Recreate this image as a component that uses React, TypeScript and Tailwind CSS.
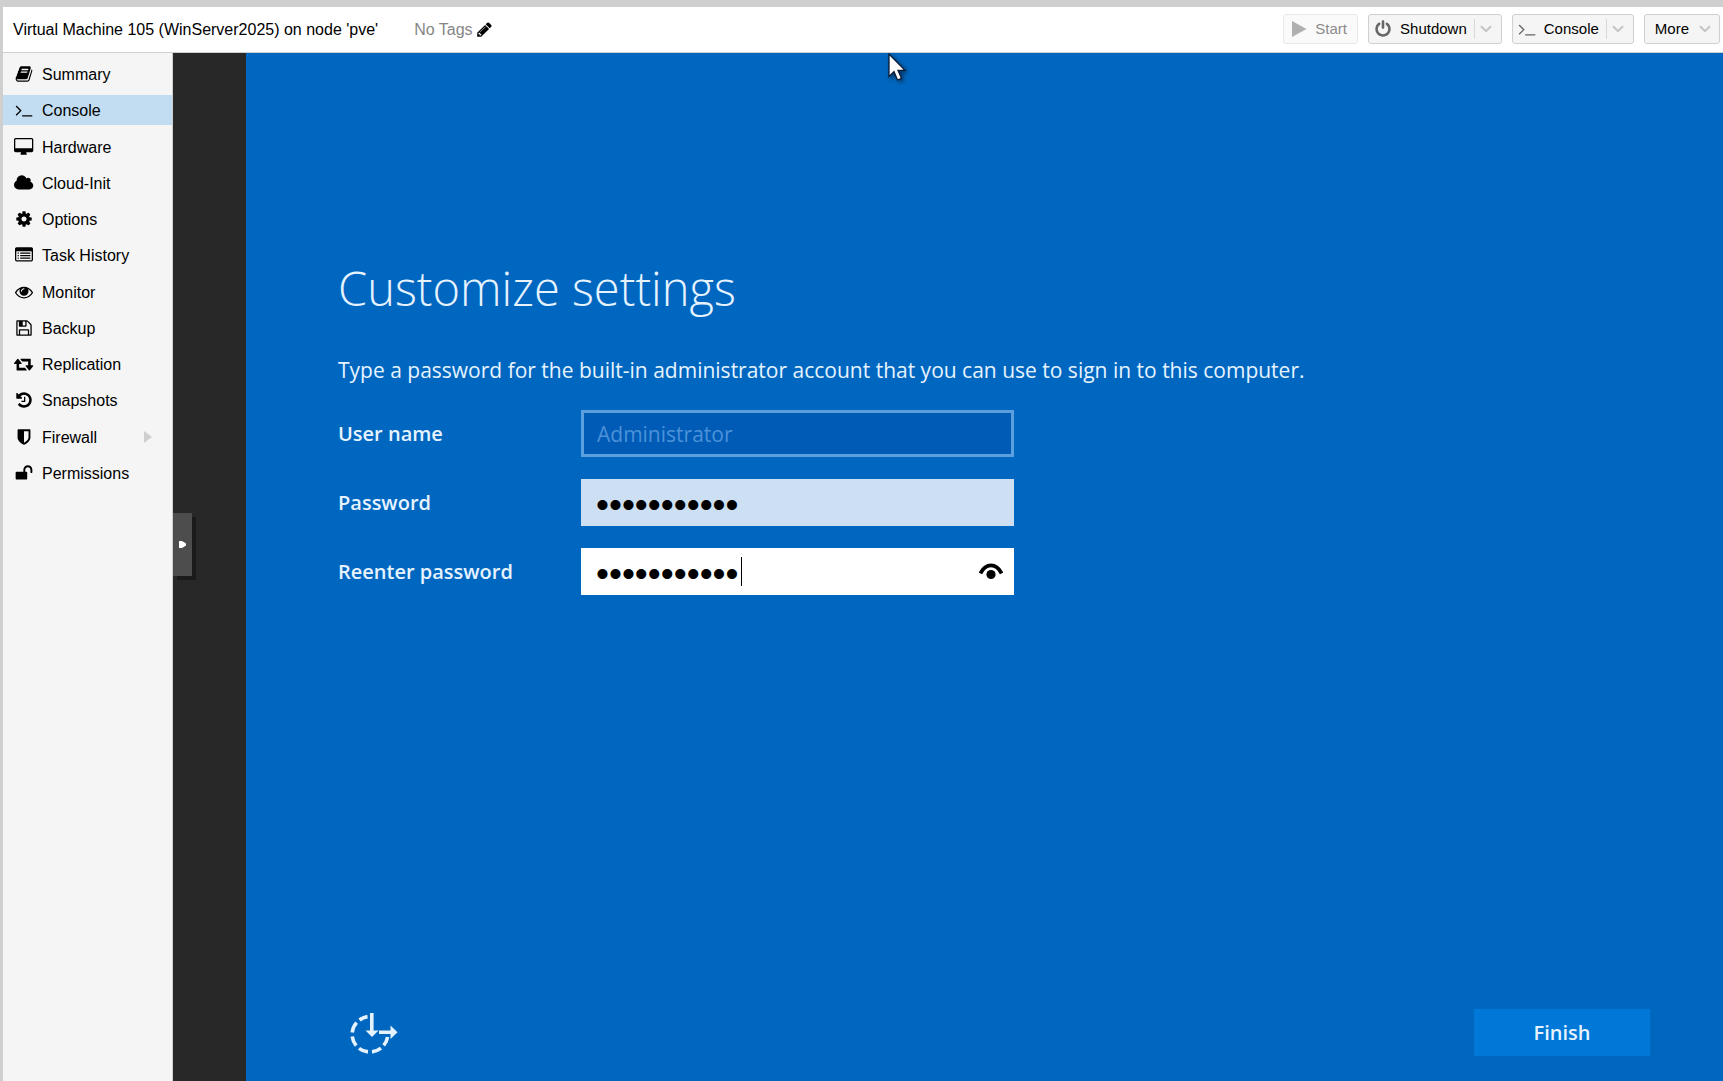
import React, { useState } from 'react';

interface IconProps {
  className?: string;
}

interface NavItem {
  label: string;
  width: number;
  path: string;
  hasChildren?: boolean;
}

const PATHS = {
  book: 'M1703 478q40 57 18 129l-275 906q-19 64-76.5 107.5t-122.5 43.5h-923q-77 0-148.5-53.5t-99.5-131.5q-24-67-2-127 0-4 3-27t4-37q1-8-3-21.5t-3-19.5q2-11 8-21t16.5-23.5 16.5-23.5q23-38 45-91.5t30-91.5q3-10 .5-30t-.5-28q3-11 17-28t17-23q21-36 42-92t25-90q1-9-2.5-32t.5-28q4-13 22-30.5t22-22.5q19-26 42.5-84.5t27.5-96.5q1-8-3-25.5t-2-26.5q2-8 9-18t18-23 17-21q8-12 16.5-30.5t15-35 16-36 19.5-32 26.5-23.5 36-11.5 47.5 5.5l-1 3q38-9 51-9h761q74 0 114 56t18 130l-274 906q-36 119-71.5 153.5t-128.5 34.5h-869q-27 0-38 15-11 16-1 43 24 70 144 70h923q29 0 56-15.5t35-41.5l300-987q7-22 5-57 38 15 59 43zm-1064 2q-4 13 2 22.5t20 9.5h608q13 0 25.5-9.5t16.5-22.5l21-64q4-13-2-22.5t-20-9.5h-608q-13 0-25.5 9.5t-16.5 22.5zm-83 256q-4 13 2 22.5t20 9.5h608q13 0 25.5-9.5t16.5-22.5l21-64q4-13-2-22.5t-20-9.5h-608q-13 0-25.5 9.5t-16.5 22.5z',
  terminal: 'M649 983l-466 466q-10 10-23 10t-23-10l-50-50q-10-10-10-23t10-23l393-393-393-393q-10-10-10-23t10-23l50-50q10-10 23-10t23 10l466 466q10 10 10 23t-10 23zm1079 457v64q0 14-9 23t-23 9h-960q-14 0-23-9t-9-23v-64q0-14 9-23t23-9h960q14 0 23 9t9 23z',
  desktop: 'M1792 992v-832q0-13-9.5-22.5t-22.5-9.5h-1600q-13 0-22.5 9.5t-9.5 22.5v832q0 13 9.5 22.5t22.5 9.5h1600q13 0 22.5-9.5t9.5-22.5zm128-832v1088q0 66-47 113t-113 47h-544q0 37 16 77.5t32 71 16 43.5q0 26-19 45t-45 19h-512q-26 0-45-19t-19-45q0-14 16-44t32-70 16-78h-544q-66 0-113-47t-47-113v-1088q0-66 47-113t113-47h1600q66 0 113 47t47 113z',
  cloud: 'M1920 1152q0 159-112.5 271.5t-271.5 112.5h-1088q-185 0-316.5-131.5t-131.5-316.5q0-132 71-241.5t187-163.5q-2-28-2-43 0-212 150-362t362-150q158 0 286.5 88t187.5 230q70-62 166-62 106 0 181 75t75 181q0 75-41 138 129 30 213 134.5t84 239.5z',
  cog: 'M1152 896q0-106-75-181t-181-75-181 75-75 181 75 181 181 75 181-75 75-181zm512-109v222q0 12-8 23t-20 13l-185 28q-19 54-39 91 35 50 107 138 10 12 10 25t-9 23q-27 37-99 108t-94 71q-12 0-26-9l-138-108q-44 23-91 38-16 136-29 186-7 28-36 28h-222q-14 0-24.5-8.5t-11.5-21.5l-28-184q-49-16-90-37l-141 107q-10 9-25 9-14 0-25-11-126-114-165-168-7-10-7-23 0-12 8-23 15-21 51-66.5t54-70.5q-27-50-41-99l-183-27q-13-2-21-12.5t-8-23.5v-222q0-12 8-23t19-13l186-28q14-46 39-92-40-57-107-138-10-12-10-24 0-10 9-23 26-36 98.5-107.5t94.5-71.5q13 0 26 10l138 107q44-23 91-38 16-136 29-186 7-28 36-28h222q14 0 24.5 8.5t11.5 21.5l28 184q49 16 90 37l142-107q9-9 24-9 13 0 25 10 129 119 165 170 7 8 7 22 0 12-8 23-15 21-51 66.5t-54 70.5q26 50 41 98l183 28q13 2 21 12.5t8 23.5z',
  list: 'M288 1152h64q32 0 32 32v64q0 32-32 32h-64q-32 0-32-32v-64q0-32 32-32zm0-256h64q32 0 32 32v64q0 32-32 32h-64q-32 0-32-32v-64q0-32 32-32zm0-256h64q32 0 32 32v64q0 32-32 32h-64q-32 0-32-32v-64q0-32 32-32zm256 512h960q32 0 32 32v64q0 32-32 32h-960q-32 0-32-32v-64q0-32 32-32zm0-256h960q32 0 32 32v64q0 32-32 32h-960q-32 0-32-32v-64q0-32 32-32zm0-256h960q32 0 32 32v64q0 32-32 32h-960q-32 0-32-32v-64q0-32 32-32zm1120 736v-832q0-32-32-32h-1472q-32 0-32 32v832q0 32 32 32h1472q32 0 32-32zm128-1088v1088q0 66-47 113t-113 47h-1472q-66 0-113-47t-47-113v-1088q0-66 47-113t113-47h1472q66 0 113 47t47 113z',
  eye: 'M1664 960q-152-236-381-353 61 104 61 225 0 185-131.5 316.5t-316.5 131.5-316.5-131.5-131.5-316.5q0-121 61-225-229 117-381 353 133 205 333.5 326.5t434.5 121.5 434.5-121.5 333.5-326.5zm-720-384q0-20-14-34t-34-14q-125 0-214.5 89.5t-89.5 214.5q0 20 14 34t34 14 34-14 14-34q0-86 61-147t147-61q20 0 34-14t14-34zm848 384q0 34-20 69-140 230-376.5 368.5t-499.5 138.5-499.5-139-376.5-368q-20-35-20-69t20-69q140-229 376.5-368t499.5-139 499.5 139 376.5 368q20 35 20 69z',
  floppy: 'M512 1536h768v-384h-768v384zm896 0h128v-896q0-14-10-38.5t-20-34.5l-281-281q-10-10-34-20t-39-10v416q0 40-28 68t-68 28h-576q-40 0-68-28t-28-68v-416h-128v1280h128v-416q0-40 28-68t68-28h832q40 0 68 28t28 68v416zm-384-928v-320q0-13-9.5-22.5t-22.5-9.5h-192q-13 0-22.5 9.5t-9.5 22.5v320q0 13 9.5 22.5t22.5 9.5h192q13 0 22.5-9.5t9.5-22.5zm640 32v928q0 40-28 68t-68 28h-1344q-40 0-68-28t-28-68v-1344q0-40 28-68t68-28h928q40 0 88 20t76 48l280 280q28 28 48 76t20 88z',
  retweet: 'M1280 1504q0 13-9.5 22.5t-22.5 9.5h-960q-8 0-13.5-2t-9-7-5.5-8-3-11.5-1-11.5v-600h-192q-26 0-45-19t-19-45q0-24 15-41l320-384q19-22 49-22t49 22l320 384q15 17 15 41 0 26-19 45t-45 19h-192v384h576q16 0 25 11l160 192q7 10 7 21zm640-416q0 24-15 41l-320 384q-20 23-49 23t-49-23l-320-384q-15-17-15-41 0-26 19-45t45-19h192v-384h-576q-16 0-25-12l-160-192q-7-9-7-20 0-13 9.5-22.5t22.5-9.5h960q8 0 13.5 2t9 7 5.5 8 3 11.5 1 11.5v600h192q26 0 45 19t19 45z',
  history: 'M1664 896q0 156-61 298t-164 245-245 164-298 61q-172 0-327-72.5t-264-204.5q-7-10-6.5-22.5t8.5-20.5l137-138q10-9 25-9 16 2 23 12 73 95 179 147t225 52q104 0 198.5-40.5t163.5-109.5 109.5-163.5 40.5-198.5-40.5-198.5-109.5-163.5-163.5-109.5-198.5-40.5q-98 0-188 35.5t-160 101.5l137 138q31 30 14 69-17 40-59 40h-448q-26 0-45-19t-19-45v-448q0-42 40-59 39-17 69 14l130 129q107-101 244.5-156.5t284.5-55.5q156 0 298 61t245 164 164 245 61 298zm-640-288v448q0 14-9 23t-23 9h-320q-14 0-23-9t-9-23v-64q0-14 9-23t23-9h224v-352q0-14 9-23t23-9h64q14 0 23 9t9 23z',
  shield: 'M1344 960v-640h-448v1137q119-63 213-137 235-184 235-360zm192-768v768q0 86-33.5 170.5t-83 150-118 127.5-126.5 103-121 77.5-89.5 49.5-42.5 20q-12 6-26 6t-26-6q-16-7-42.5-20t-89.5-49.5-121-77.5-126.5-103-118-127.5-83-150-33.5-170.5v-768q0-26 19-45t45-19h1152q26 0 45 19t19 45z',
  unlock: 'M1728 576v256q0 26-19 45t-45 19h-64q-26 0-45-19t-19-45v-256q0-106-75-181t-181-75-181 75-75 181v192h96q40 0 68 28t28 68v576q0 40-28 68t-68 28h-960q-40 0-68-28t-28-68v-576q0-40 28-68t68-28h672v-192q0-185 131.5-316.5t316.5-131.5 316.5 131.5 131.5 316.5z',
  power: 'M1664 896q0 156-61 298t-164 245-245 164-298 61-298-61-245-164-164-245-61-298q0-182 80.5-343t226.5-270q43-32 95.5-25t83.5 50q32 42 24.5 94.5t-49.5 84.5q-98 74-151.5 181t-53.5 228q0 104 40.5 198.5t109.5 163.5 163.5 109.5 198.5 40.5 198.5-40.5 163.5-109.5 109.5-163.5 40.5-198.5q0-121-53.5-228t-151.5-181q-42-32-49.5-84.5t24.5-94.5q31-43 84-50t95 25q146 109 226.5 270t80.5 343zm-640-768v640q0 52-38 90t-90 38-90-38-38-90v-640q0-52 38-90t90-38 90 38 38 90z',
  pencil: 'M491 1536l91-91-235-235-91 91v107h128v128h107zm523-928q0-22-22-22-10 0-17 7l-542 542q-7 7-7 17 0 22 22 22 10 0 17-7l542-542q7-7 7-17zm-54-192l416 416-832 832h-416v-416zm683 96q0 53-37 90l-166 166-416-416 166-165q36-38 90-38 53 0 91 38l235 234q37 39 37 91z',
};

const NAV: NavItem[] = [
  { label: 'Summary', width: 1792, path: PATHS.book },
  { label: 'Console', width: 1792, path: PATHS.terminal },
  { label: 'Hardware', width: 1920, path: PATHS.desktop },
  { label: 'Cloud-Init', width: 1920, path: PATHS.cloud },
  { label: 'Options', width: 1792, path: PATHS.cog },
  { label: 'Task History', width: 1792, path: PATHS.list },
  { label: 'Monitor', width: 1792, path: PATHS.eye },
  { label: 'Backup', width: 1792, path: PATHS.floppy },
  { label: 'Replication', width: 1920, path: PATHS.retweet },
  { label: 'Snapshots', width: 1792, path: PATHS.history },
  { label: 'Firewall', width: 1792, path: PATHS.shield, hasChildren: true },
  { label: 'Permissions', width: 1792, path: PATHS.unlock },
];

const Glyph: React.FC<IconProps & { path: string; width?: number }> = ({ path, width = 1792, className }) => (
  <svg viewBox={`0 0 ${width} 1792`} fill="currentColor" className={className} aria-hidden="true">
    <path d={path} />
  </svg>
);

const Chevron: React.FC<IconProps> = ({ className }) => (
  <svg viewBox="0 0 12 8" fill="none" stroke="currentColor" strokeWidth="2" className={className} aria-hidden="true">
    <path d="M1 1.2l5 5 5-5" />
  </svg>
);

// Dashed circle with two arrows (ease of access)
const EaseOfAccess = () => (
  <svg viewBox="0 0 48 42" fill="none" stroke="currentColor" strokeWidth="3.6" className="w-12 h-[42px]" aria-hidden="true">
    <path d="M17.5 4.6A17.5 17.5 0 0 0 9.5 8M6.6 10.6A17.5 17.5 0 0 0 2.2 20.5M2.2 24.6A17.5 17.5 0 0 0 6.2 33.6M9 36.3A17.5 17.5 0 0 0 18 39.9M22 39.9A17.5 17.5 0 0 0 31 36.2M33.7 33.4A17.5 17.5 0 0 0 37.6 25" />
    <path d="M21.8 1v20M29 20.2h12" />
    <path d="M15.5 18.5h13l-6.5 6.5z" fill="currentColor" stroke="none" />
    <path d="M40.5 13.5v13.4l7-6.7z" fill="currentColor" stroke="none" />
  </svg>
);

interface SplitButtonProps {
  label: string;
  path: string;
}

const SplitButton: React.FC<SplitButtonProps> = ({ label, path }) => (
  <div className="flex items-center h-[30px] bg-[#f5f5f5] border border-[#d0d0d0] rounded-[3px]">
    <button type="button" className="flex items-center h-full gap-2 pl-[5px] pr-[7px]">
      <Glyph path={path} className="w-[18px] h-[18px] text-[#666]" />
      {label}
    </button>
    <button type="button" aria-label={`${label} menu`} className="flex items-center h-5 pl-[5px] pr-[9px] border-l border-[#d8d8d8] text-[#c4c4c4]">
      <Chevron className="w-3 h-2" />
    </button>
  </div>
);

const App: React.FC = () => {
  const [active, setActive] = useState('Console');
  const [password, setPassword] = useState('12345678901');
  const [confirm, setConfirm] = useState('12345678901');

  return (
    <div className="min-h-screen flex flex-col bg-[#cfcfcf] pt-[7px] pl-[3px] font-['Liberation_Sans',Arial,sans-serif] text-black">
      <header className="flex items-center justify-between h-[46px] shrink-0 bg-white border-b border-[#cfcfcf] pl-[10px] pr-[3px]">
        <div className="flex items-center text-base whitespace-nowrap">
          <h1>Virtual Machine 105 (WinServer2025) on node 'pve'</h1>
          <button type="button" className="ml-9 flex items-center gap-[3px] text-[#858585]">
            No Tags
            <Glyph path={PATHS.pencil} className="w-[17px] h-[17px] text-black" />
          </button>
        </div>
        <div className="flex items-center gap-[10px] text-[15px] -mt-px">
          <button type="button" disabled className="flex items-center h-[30px] gap-2 pl-[7px] pr-[10px] bg-[#fafafa] border border-[#e8e8e8] rounded-[3px] text-[#8a8a8a]">
            <svg viewBox="0 0 16 16" className="w-4 h-4 text-[#b0b0b0]" fill="currentColor" aria-hidden="true">
              <path d="M1 0l14.5 8L1 16z" />
            </svg>
            Start
          </button>
          <SplitButton label="Shutdown" path={PATHS.power} />
          <SplitButton label="Console" path={PATHS.terminal} />
          <button type="button" className="flex items-center h-[30px] gap-[10px] pl-[10px] pr-2 bg-[#f5f5f5] border border-[#d0d0d0] rounded-[3px]">
            More
            <Chevron className="w-3 h-2 text-[#c4c4c4]" />
          </button>
        </div>
      </header>

      <div className="flex flex-1">
        <nav className="w-[170px] shrink-0 bg-[#f5f5f5] border-r border-[#cfcfcf] pt-[6px]">
          <ul className="flex flex-col justify-between h-[429px]">
            {NAV.map((item) => (
              <li key={item.label}>
                <button
                  type="button"
                  onClick={() => setActive(item.label)}
                  className={`flex items-center w-full h-[30px] pl-[11px] pr-5 text-base text-left ${active === item.label ? 'bg-[#c2ddf2]' : ''}`}
                >
                  <span className="flex justify-center w-5 mr-2">
                    <Glyph path={item.path} width={item.width} className="h-[18px]" />
                  </span>
                  <span className="flex-1 pt-[2px]">{item.label}</span>
                  {item.hasChildren && (
                    <svg viewBox="0 0 8 12" className="w-2 h-3 text-[#cfcfcf]" fill="currentColor" aria-hidden="true">
                      <path d="M0 0l8 6-8 6z" />
                    </svg>
                  )}
                </button>
              </li>
            ))}
          </ul>
        </nav>

        <main className="relative flex flex-1 bg-[#282828] pl-[73px]">
          {/* noVNC control bar handle */}
          <button
            type="button"
            aria-label="Open control bar"
            className="absolute left-0 top-[460px] flex items-center w-[19px] h-[63px] pl-[6px] bg-[#4d4d4d] shadow-[4px_4px_0_#1a1a1a]"
          >
            <svg viewBox="0 0 7 7" className="w-[7px] h-[7px]" fill="#fff" aria-hidden="true">
              <path d="M0 0h3l4 2.5v2L3 7H0z" />
            </svg>
          </button>

          {/* Guest screen */}
          <section className="relative flex flex-col flex-1 bg-[#0067c0] text-[#e6f3ff] font-['Open_Sans','Noto_Sans',sans-serif] pl-[92px] pr-[73px] pb-[25px]">
            <h2 className="mt-[203px] text-[47px] leading-[64px] font-light whitespace-nowrap">Customize settings</h2>
            <p className="mt-[34px] text-[21px] leading-[32px] whitespace-nowrap">
              Type a password for the built-in administrator account that you can use to sign in to this computer.
            </p>

            <form id="setup" className="mt-6 flex flex-col gap-[22px]" onSubmit={(e) => e.preventDefault()}>
              <div className="flex items-center">
                <label htmlFor="user" className="w-[243px] text-xl font-semibold">User name</label>
                <input
                  id="user"
                  type="text"
                  value="Administrator"
                  disabled
                  className="w-[433px] h-[47px] px-[13px] border-3 border-[#5c9fdf] bg-[#005bb7] text-[21px] text-[#4b92d8]"
                />
              </div>
              <div className="flex items-center">
                <label htmlFor="pass" className="w-[243px] text-xl font-semibold">Password</label>
                <input
                  id="pass"
                  type="password"
                  value={password}
                  onChange={(e) => setPassword(e.target.value)}
                  className="w-[433px] h-[47px] px-[15px] pt-[5px] bg-[#ccdff3] text-black text-[37px] leading-[42px] font-['Liberation_Sans',Arial,sans-serif] outline-none"
                />
              </div>
              <div className="flex items-center">
                <label htmlFor="confirm" className="w-[243px] text-xl font-semibold">Reenter password</label>
                <div className="relative">
                  <input
                    id="confirm"
                    type="password"
                    value={confirm}
                    onChange={(e) => setConfirm(e.target.value)}
                    className="block w-[433px] h-[47px] px-[15px] pt-[5px] bg-white text-black text-[37px] leading-[42px] font-['Liberation_Sans',Arial,sans-serif] outline-none"
                  />
                  <span className="absolute left-[160px] top-[9px] w-px h-[29px] bg-black" />
                  <button type="button" aria-label="Reveal password" className="absolute right-[11px] top-[15px] text-black">
                    <svg viewBox="0 0 24 17" className="w-6 h-[17px]" aria-hidden="true">
                      <path d="M1.4 10.5C4.2 4.8 7.8 2.4 12 2.4s7.8 2.4 10.6 8.1" fill="none" stroke="currentColor" strokeWidth="3.8" />
                      <circle cx="12" cy="11.5" r="4.6" fill="currentColor" />
                    </svg>
                  </button>
                </div>
              </div>
            </form>

            <div className="mt-auto flex items-end justify-between">
              <button type="button" aria-label="Ease of access" className="ml-3 mb-[2px]">
                <EaseOfAccess />
              </button>
              <button type="submit" form="setup" className="w-44 h-[47px] bg-[#0078d7] text-xl font-semibold">
                Finish
              </button>
            </div>

            {/* Mouse pointer */}
            <svg viewBox="0 0 20 30" className="absolute left-[642px] top-0 w-5 h-[30px] drop-shadow-[2px_2px_2px_rgba(0,0,0,0.5)]" aria-hidden="true">
              <path d="M1 1v22.5l5-4.8 3.5 8.3 4-1.7-3.5-8h7z" fill="#fff" stroke="#0b1a33" strokeWidth="1.3" />
            </svg>
          </section>
        </main>
      </div>
    </div>
  );
};

export default App;
